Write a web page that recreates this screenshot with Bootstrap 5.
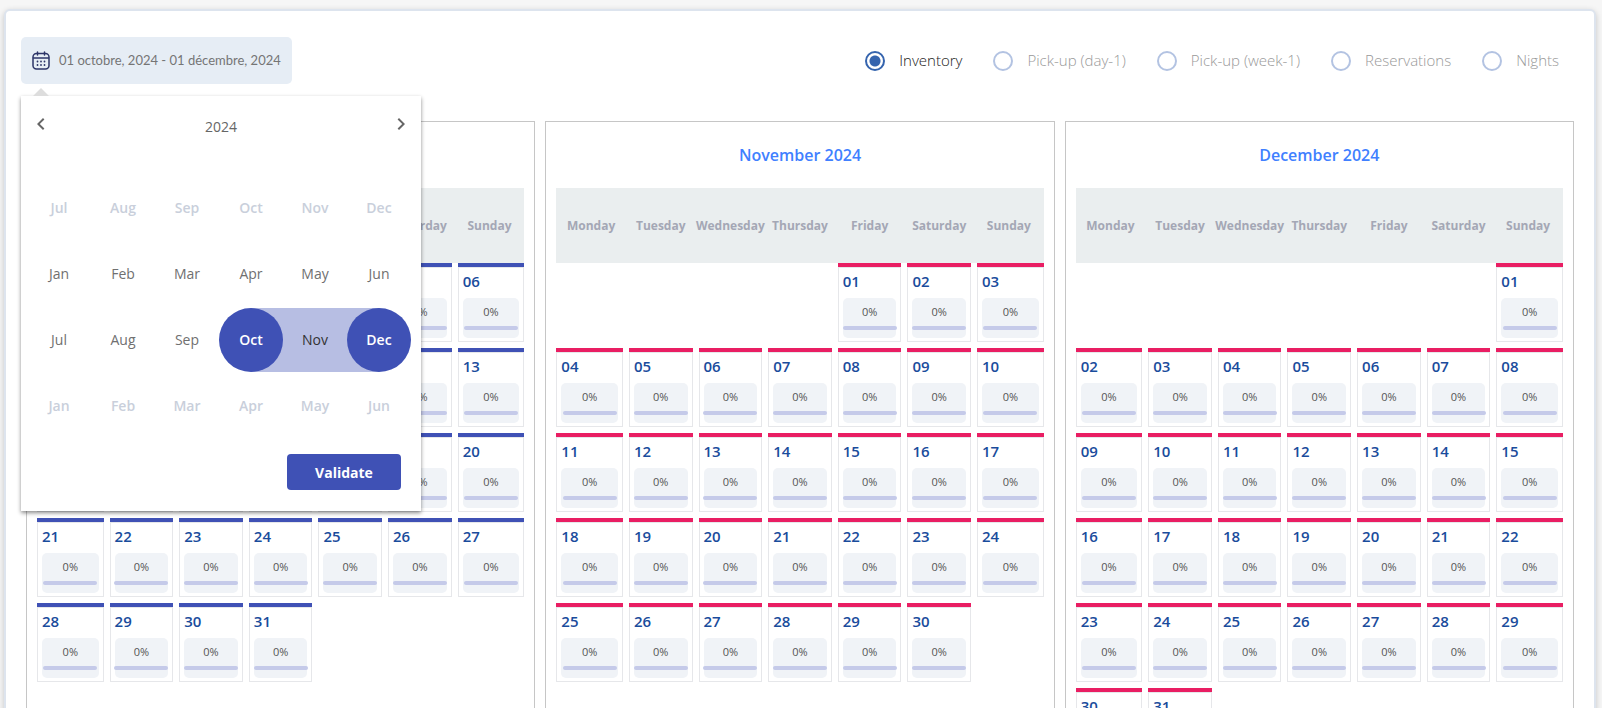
<!DOCTYPE html>
<html lang="en">
<head>
<meta charset="utf-8">
<meta name="viewport" content="width=device-width, initial-scale=1">
<title>Inventory calendar</title>
<link href="https://cdn.jsdelivr.net/npm/bootstrap@5.3.0/dist/css/bootstrap.min.css" rel="stylesheet">
<style>
  :root { --indigo: #3f51b5; --pink: #e91e63; }
  body { font-family: "Open Sans", "Noto Sans", sans-serif; background: #f6f6f6; color: #666; }
  .panel { margin: 9px 6px 0 4px; padding: 26px 20px 40px 15px; border: 2px solid #dde4ee; border-radius: 6px; background: #fff; box-shadow: 0 2px 6px rgba(0, 0, 0, .2); }

  .date-btn { min-width: 268px; height: 47px; padding: 0 10px; gap: 9px; border-radius: 5px; background: #e6edf5; color: #757575; font-family: Lato, "Open Sans", sans-serif; font-size: 13px; }
  .date-btn:hover { background: #dce6f1; }

  .picker { top: 59px; left: 0; z-index: 10; width: 400px; padding-bottom: 21px; background: #fff; box-shadow: 0 2px 4px rgba(0, 0, 0, .45); }
  .picker::before { content: ""; position: absolute; left: 12px; top: -8px; border: 8px solid transparent; border-top: 0; border-bottom-color: #ddd; }
  .picker-head { padding: 16px 8px 0; height: 80px; }
  .picker-head .btn { width: 24px; height: 24px; line-height: 0; }
  .year { font-size: 14px; padding-top: 4px; }
  .months { display: grid; grid-template-columns: repeat(6, 1fr); row-gap: 2px; margin: 0 10px 0 6px; }
  .months button { height: 64px; padding: 0 0 2px; border: 0; background: none; color: #707070; font-size: 14px; }
  .months button:disabled { color: #c9cfdb; font-weight: 600; }
  .months .in-range { background: #b7bee3; color: #333; }
  .months .range-start { padding: 0; background: linear-gradient(to right, transparent 50%, #b7bee3 50%); }
  .months .range-end { padding: 0; background: linear-gradient(to left, transparent 50%, #b7bee3 50%); }
  .months .range-start span, .months .range-end span { display: flex; align-items: center; justify-content: center; height: 64px; padding-bottom: 2px; border-radius: 50%; background: var(--indigo); color: #fff; font-weight: 600; }
  .validate { width: 114px; height: 36px; margin: 16px 20px 0 0; padding: 0; border-radius: 4px; background: var(--indigo); color: #fff; font-size: 14px; font-weight: 700; }
  .validate:hover { background: #34449c; color: #fff; }

  .views { gap: 31px; padding-right: 15px; font-weight: 300; font-size: 15px; color: #999; }
  .views label { gap: 14px; cursor: pointer; }
  .views input { width: 20px; height: 20px; margin: 0; border: 2px solid #b3c3e2; background: #fff; }
  .views input:checked { border-color: #3564ae; background: radial-gradient(circle, #3564ae 5px, #fff 6px) center; }
  .views input:checked + span { color: #222; }

  .board { gap: 10px; margin: 37px 0 0 5px; }
  .month { flex: 1 1 0; min-width: 0; padding: 0 10px 10px; border: 1px solid #c6c6c6; }
  .month h2 { margin: 0; padding: 23px 0; line-height: 20px; font-size: 16px; font-weight: 600; color: #4080ff; }
  .month table { width: 100%; table-layout: fixed; border-collapse: collapse; }
  .month th { height: 75px; padding: 0; background: #eaeeef; color: #a4a7b5; font-size: 12px; font-weight: 700; text-align: center; white-space: nowrap; }
  .month td { padding: 0 3px 6px; }
  .month td:first-child { padding-left: 0; }
  .month td:last-child { padding-right: 0; }
  .day { height: 79px; border-top: 4px solid var(--pink); }
  .past .day { border-top-color: var(--indigo); }
  .day-body { height: 75px; padding: 4px; border: 1px solid #e6e7ea; }
  .day-no { height: 26px; line-height: 18px; font-size: 15px; font-weight: 600; color: #1a4c9c; }
  .rate { height: 40px; border-radius: 5px; background: #f0f3f7; font-size: 11px; color: #555; padding-top: 4px; }
  .rate span { line-height: 20px; }
  .rate i { width: 54px; height: 4px; margin-top: 4px; border-radius: 2px; background: #c5cae9; flex: none; }
</style>
</head>
<body>
<main class="panel">
  <div class="d-flex justify-content-between align-items-center">
    <div class="position-relative">
      <button type="button" class="btn date-btn d-flex align-items-center" aria-expanded="true">
        <svg width="18" height="19" viewBox="0 0 18 19" fill="none" stroke="#2d3568" stroke-width="1.5" stroke-linecap="round" aria-hidden="true">
          <rect x="1" y="2.5" width="16" height="15.5" rx="3.5"/><path d="M1.5 7h15M5.5 1v3M12.5 1v3"/>
          <path d="M5.5 10.5h.01M9 10.5h.01M12.5 10.5h.01M5.5 14h.01M9 14h.01M12.5 14h.01" stroke-width="1.8"/>
        </svg>
        <span>01 octobre, 2024 - 01 décembre, 2024</span>
      </button>
      <div class="picker position-absolute">
        <div class="picker-head d-flex justify-content-between align-items-start">
          <button type="button" class="btn p-0 border-0" aria-label="Previous year"><svg width="24" height="24" viewBox="0 0 24 24" fill="#666"><path d="M15.4 7.4 14 6l-6 6 6 6 1.4-1.4L10.8 12z"/></svg></button>
          <span class="year">2024</span>
          <button type="button" class="btn p-0 border-0" aria-label="Next year"><svg width="24" height="24" viewBox="0 0 24 24" fill="#666"><path d="M10 6 8.6 7.4l4.6 4.6-4.6 4.6L10 18l6-6z"/></svg></button>
        </div>
        <div class="months">
          <button type="button" disabled>Jul</button><button type="button" disabled>Aug</button><button type="button" disabled>Sep</button><button type="button" disabled>Oct</button><button type="button" disabled>Nov</button><button type="button" disabled>Dec</button>
          <button type="button">Jan</button><button type="button">Feb</button><button type="button">Mar</button><button type="button">Apr</button><button type="button">May</button><button type="button">Jun</button>
          <button type="button">Jul</button><button type="button">Aug</button><button type="button">Sep</button><button type="button" class="range-start"><span>Oct</span></button><button type="button" class="in-range">Nov</button><button type="button" class="range-end"><span>Dec</span></button>
          <button type="button" disabled>Jan</button><button type="button" disabled>Feb</button><button type="button" disabled>Mar</button><button type="button" disabled>Apr</button><button type="button" disabled>May</button><button type="button" disabled>Jun</button>
        </div>
        <div class="d-flex justify-content-end"><button type="button" class="btn validate">Validate</button></div>
      </div>
    </div>
    <div class="views d-flex align-items-center" role="radiogroup" aria-label="View">
      <label class="d-flex align-items-center"><input class="form-check-input" type="radio" name="view" checked><span>Inventory</span></label>
      <label class="d-flex align-items-center"><input class="form-check-input" type="radio" name="view"><span>Pick-up (day-1)</span></label>
      <label class="d-flex align-items-center"><input class="form-check-input" type="radio" name="view"><span>Pick-up (week-1)</span></label>
      <label class="d-flex align-items-center"><input class="form-check-input" type="radio" name="view"><span>Reservations</span></label>
      <label class="d-flex align-items-center"><input class="form-check-input" type="radio" name="view"><span>Nights</span></label>
    </div>
  </div>
  <div class="board d-flex" id="board"></div>
</main>
<script src="https://cdn.jsdelivr.net/npm/bootstrap@5.3.0/dist/js/bootstrap.bundle.min.js"></script>
<script>
  const weekdays = ['Monday', 'Tuesday', 'Wednesday', 'Thursday', 'Friday', 'Saturday', 'Sunday'];
  // first: column of day 1, counted from Monday
  const months = [
    { name: 'October 2024', first: 1, days: 31, past: true },
    { name: 'November 2024', first: 4, days: 30 },
    { name: 'December 2024', first: 6, days: 31 }
  ];
  const dayCell = n => `<td><div class="day"><div class="day-body"><div class="day-no">${String(n).padStart(2, '0')}</div><div class="rate d-flex flex-column align-items-center"><span>0%</span><i></i></div></div></div></td>`;
  document.getElementById('board').innerHTML = months.map(m => {
    let rows = '';
    for (let start = 1 - m.first; start <= m.days; start += 7) {
      rows += '<tr>';
      for (let n = start; n < start + 7; n++) rows += n < 1 || n > m.days ? '<td></td>' : dayCell(n);
      rows += '</tr>';
    }
    return `<section class="month${m.past ? ' past' : ''}"><h2 class="text-center">${m.name}</h2><table><thead><tr>${weekdays.map(d => `<th scope="col">${d}</th>`).join('')}</tr></thead><tbody>${rows}</tbody></table></section>`;
  }).join('');
</script>
</body>
</html>
